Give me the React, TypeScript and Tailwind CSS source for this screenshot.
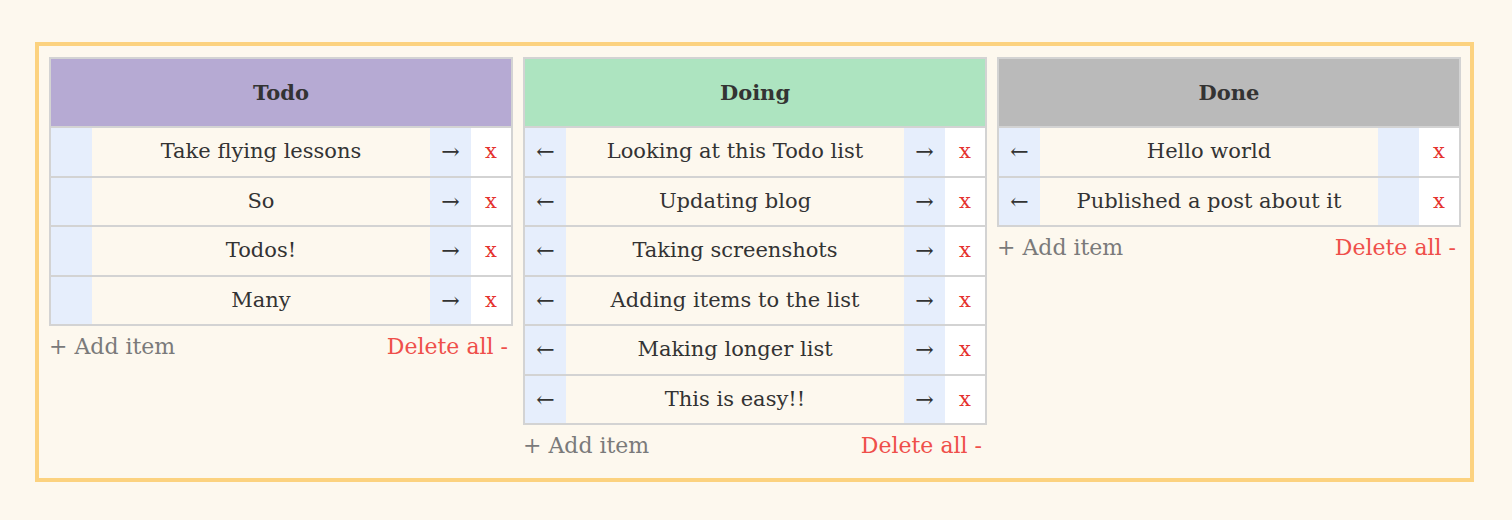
import React from 'react';

type Column = {
  title: string;
  headerBg: string;
  items: string[];
  canBack: boolean;
  canForward: boolean;
};

const columns: Column[] = [
  {
    title: 'Todo',
    headerBg: 'bg-[#b6aad3]',
    items: ['Take flying lessons', 'So', 'Todos!', 'Many'],
    canBack: false,
    canForward: true,
  },
  {
    title: 'Doing',
    headerBg: 'bg-[#ade4c0]',
    items: [
      'Looking at this Todo list',
      'Updating blog',
      'Taking screenshots',
      'Adding items to the list',
      'Making longer list',
      'This is easy!!',
    ],
    canBack: true,
    canForward: true,
  },
  {
    title: 'Done',
    headerBg: 'bg-[#bababa]',
    items: ['Hello world', 'Published a post about it'],
    canBack: true,
    canForward: false,
  },
];

function Board({ col }: { col: Column }) {
  return (
    <div className="flex flex-col">
      <div className="border-2 border-[#d3d3d3]">
        <div className={`${col.headerBg} h-[67px] flex items-center justify-center font-bold text-[21px] text-[#333]`}>
          {col.title}
        </div>
        {col.items.map((item) => (
          <div
            key={item}
            className="grid grid-cols-[41px_1fr_41px_40px] h-[49.5px] border-t-2 border-[#d3d3d3] text-[21px] text-[#333]"
          >
            <div className="bg-[#e6eefc] flex items-center justify-center text-[22px]">
              {col.canBack ? '←' : ''}
            </div>
            <div className="flex items-center justify-center">{item}</div>
            <div className="bg-[#e6eefc] flex items-center justify-center text-[22px]">
              {col.canForward ? '→' : ''}
            </div>
            <div className="bg-white flex items-center justify-center text-[#e5322d]">x</div>
          </div>
        ))}
      </div>
      <div className="flex justify-between items-center h-[42px] text-[22px] leading-none">
        <span className="text-[#7a7a7a]">+ Add item</span>
        <span className="text-[#ef4f4a] pr-[5px]">Delete all -</span>
      </div>
    </div>
  );
}

export default function App() {
  return (
    <div
      className="min-h-[520px] bg-[#fdf8ee] pt-[42px] pl-[35px] pr-[38px]"
      style={{ fontFamily: '"DejaVu Serif", serif' }}
    >
      <div className="border-4 border-[#fcd27f] pt-[11px] pl-[10px] pr-[9px] pb-[11px] grid grid-cols-3 gap-[10px] items-start">
        {columns.map((col) => (
          <Board key={col.title} col={col} />
        ))}
      </div>
    </div>
  );
}
